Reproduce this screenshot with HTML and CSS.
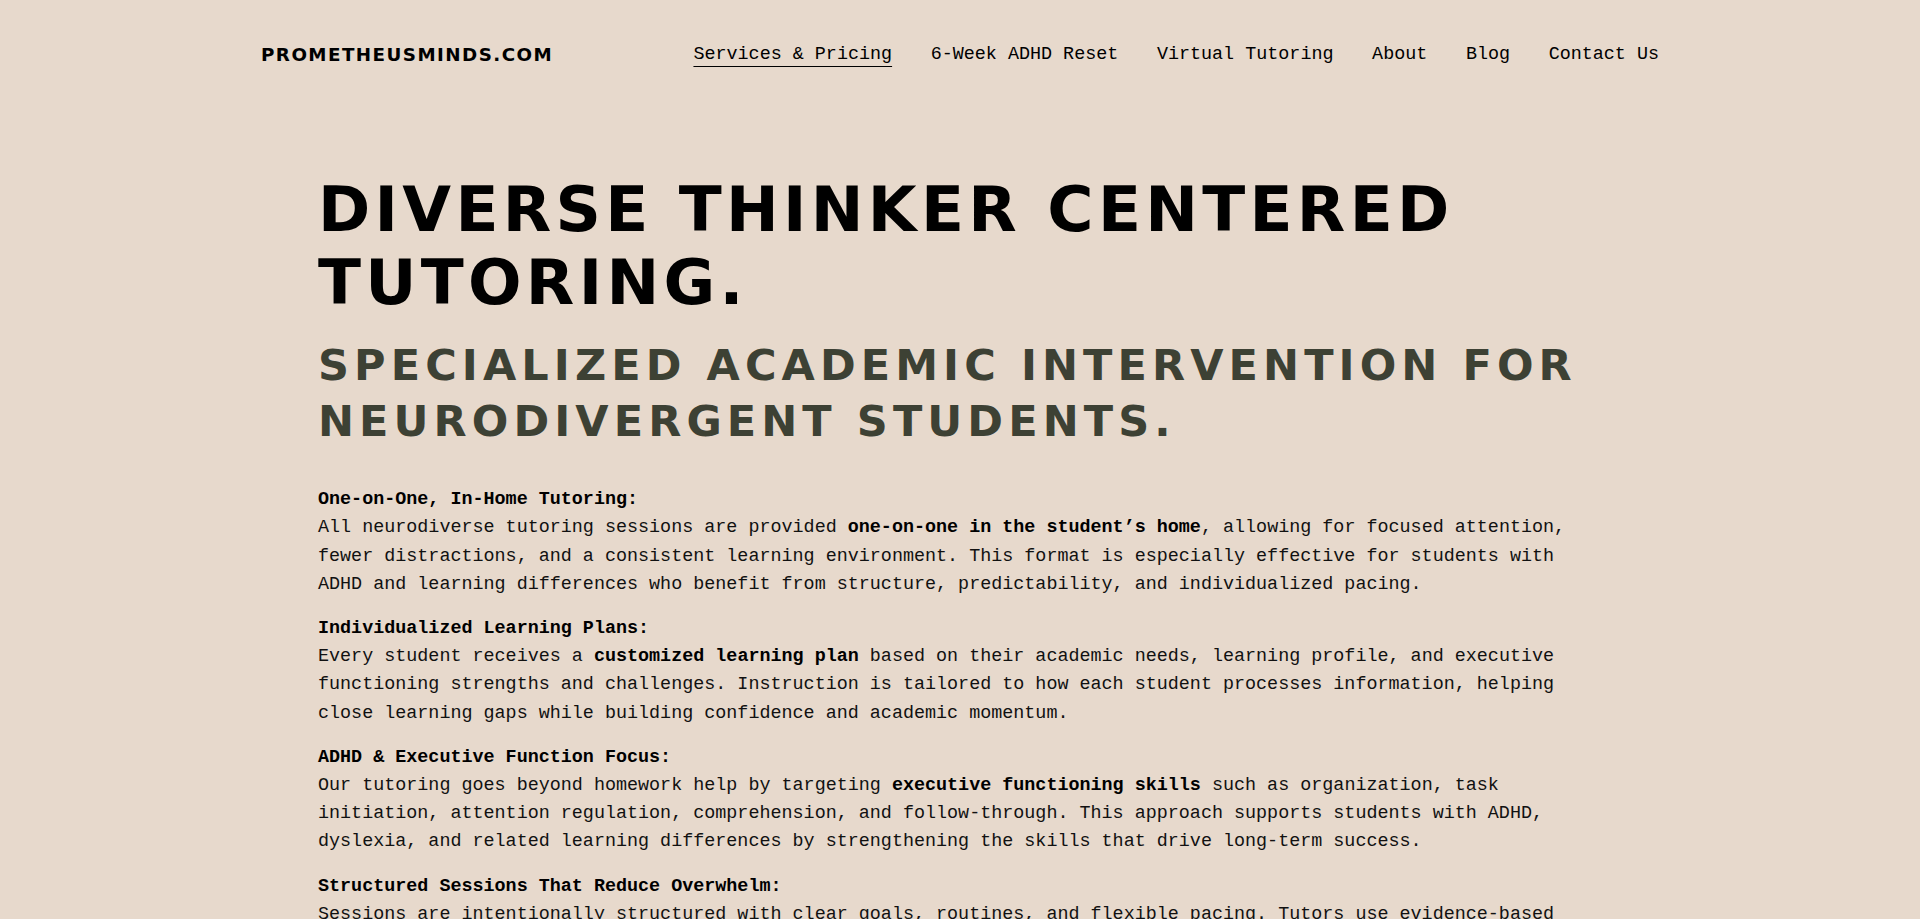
FILE: index.html
```html
<!DOCTYPE html>
<html lang="en">
<head>
<meta charset="utf-8">
<title>Services &amp; Pricing — PrometheusMinds</title>
<link rel="stylesheet" href="styles.css">
</head>
<body>
<header class="site-header">
  <a class="logo" href="#">PROMETHEUSMINDS.COM</a>
  <nav class="main-nav">
    <a class="nav-link is-active" href="#">Services &amp; Pricing</a>
    <a class="nav-link" href="#">6-Week ADHD Reset</a>
    <a class="nav-link" href="#">Virtual Tutoring</a>
    <a class="nav-link" href="#">About</a>
    <a class="nav-link" href="#">Blog</a>
    <a class="nav-link" href="#">Contact Us</a>
  </nav>
</header>
<main class="content">
  <h1 class="title">DIVERSE THINKER CENTERED TUTORING.</h1>
  <h2 class="subtitle">SPECIALIZED ACADEMIC INTERVENTION FOR NEURODIVERGENT STUDENTS.</h2>
  <section class="services">
    <p class="service"><strong>One-on-One, In-Home Tutoring:</strong><br>All neurodiverse tutoring sessions are provided <strong>one-on-one in the student’s home</strong>, allowing for focused attention, fewer distractions, and a consistent learning environment. This format is especially effective for students with ADHD and learning differences who benefit from structure, predictability, and individualized pacing.</p>
    <p class="service"><strong>Individualized Learning Plans:</strong><br>Every student receives a <strong>customized learning plan</strong> based on their academic needs, learning profile, and executive functioning strengths and challenges. Instruction is tailored to how each student processes information, helping close learning gaps while building confidence and academic momentum.</p>
    <p class="service"><strong>ADHD &amp; Executive Function Focus:</strong><br>Our tutoring goes beyond homework help by targeting <strong>executive functioning skills</strong> such as organization, task initiation, attention regulation, comprehension, and follow-through. This approach supports students with ADHD, dyslexia, and related learning differences by strengthening the skills that drive long-term success.</p>
    <p class="service"><strong>Structured Sessions That Reduce Overwhelm:</strong><br>Sessions are intentionally structured with clear goals, routines, and flexible pacing. Tutors use evidence-based strategies to reduce overwhelm, build independence, and help students feel calm, capable, and confident while learning.</p>
  </section>
</main>
</body>
</html>
```
FILE: styles.css
```css
* { box-sizing: border-box; }

html, body {
  margin: 0;
  padding: 0;
}

body {
  background: #e7d9cc;
  color: #111111;
  font-family: "Liberation Mono", "DejaVu Sans Mono", monospace;
  font-size: 18.4px;
  line-height: 28.2px;
}

a { color: inherit; text-decoration: none; }

.site-header {
  display: flex;
  justify-content: space-between;
  align-items: flex-start;
  padding: 41px 261px 0;
}

.logo {
  font-family: "DejaVu Sans", "Liberation Sans", sans-serif;
  font-weight: 700;
  font-size: 18.3px;
  line-height: 28.2px;
  letter-spacing: 1.45px;
  color: #000;
}

.main-nav {
  display: flex;
  gap: 38.6px;
}

.nav-link {
  color: #000;
  white-space: nowrap;
}

.nav-link.is-active {
  text-decoration: underline;
  text-decoration-thickness: 1px;
  text-underline-offset: 7px;
}

.content {
  max-width: 1284px;
  margin: 0 auto;
  padding-top: 103.3px;
}

.title {
  margin: 0;
  font-family: "DejaVu Sans", "Liberation Sans", sans-serif;
  font-weight: 700;
  font-size: 63px;
  line-height: 73px;
  letter-spacing: 4.3px;
  color: #000;
}

.subtitle {
  margin: 18.3px 0 0;
  font-family: "DejaVu Sans", "Liberation Sans", sans-serif;
  font-weight: 700;
  font-size: 43px;
  line-height: 56px;
  letter-spacing: 5.1px;
  color: #3d4134;
}

.services {
  margin-top: 37.4px;
}

.service {
  margin: 0 0 16px;
}

.service strong {
  font-weight: 700;
  color: #000;
}
```
